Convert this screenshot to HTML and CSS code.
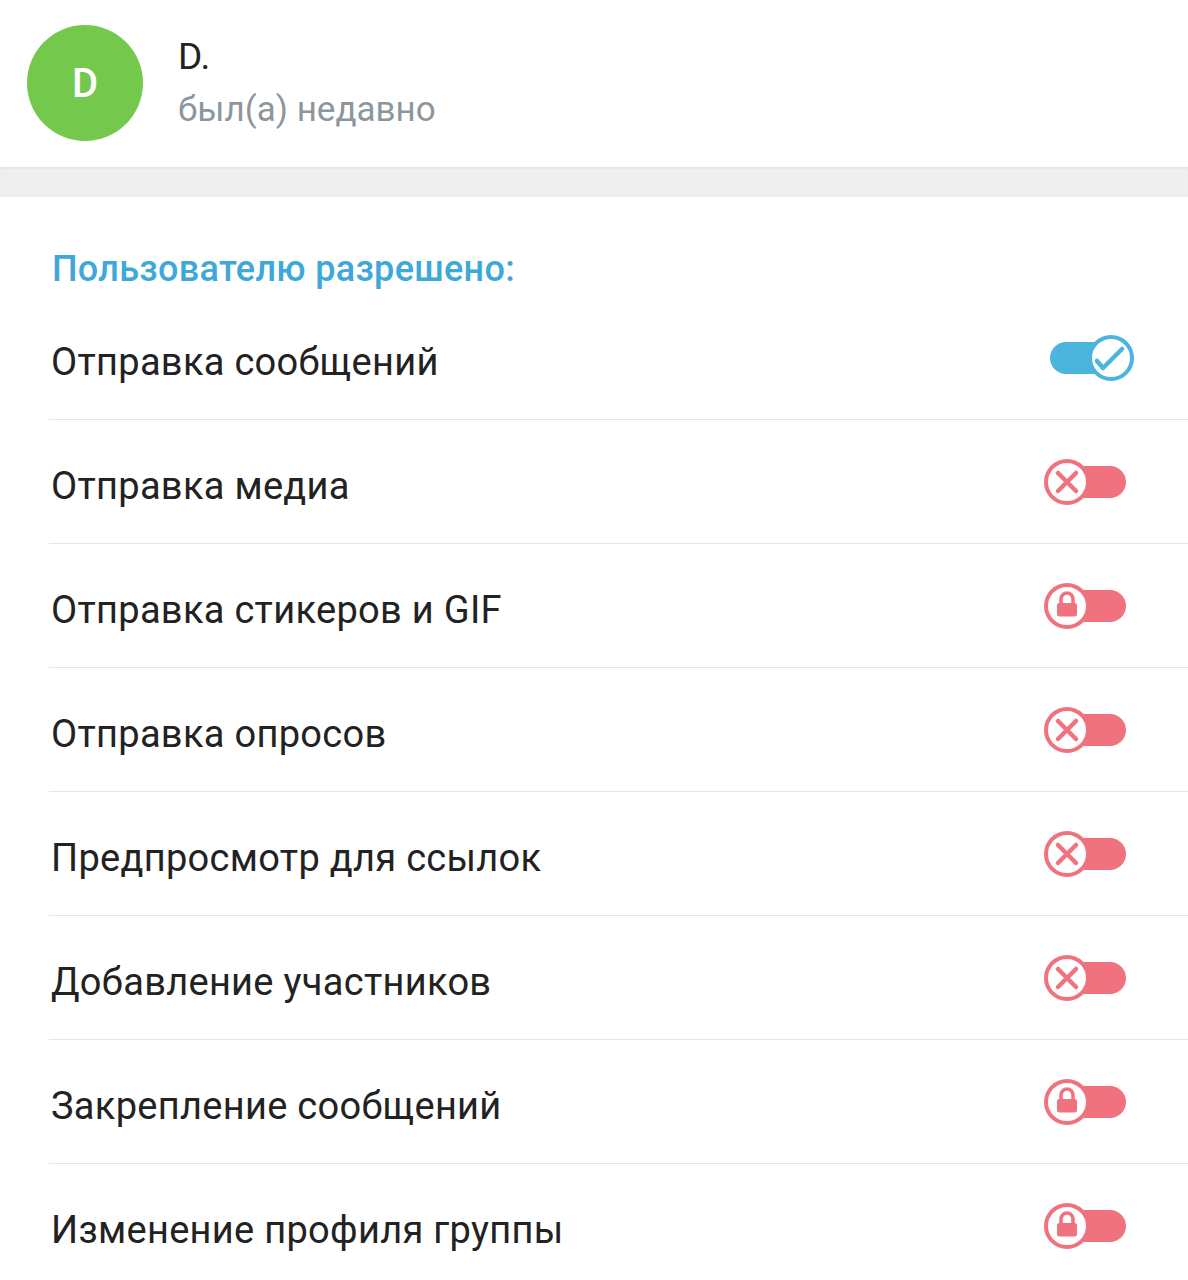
FILE: index.html
```html
<!DOCTYPE html>
<html lang="ru">
<head>
  <meta charset="UTF-8" />
  <title>Разрешения</title>
  <link rel="stylesheet" href="styles.css">
</head>
<body>

<div class="header">
  <div class="avatar">D</div>
  <div class="info">
    <div class="name">D.</div>
    <div class="status">был(а) недавно</div>
  </div>
</div>

<div class="band"></div>

<div class="section">
  <div class="section-title">Пользователю разрешено:</div>

  <div class="row">
    <span class="label">Отправка сообщений</span>
    <svg class="toggle" width="90" height="48" viewBox="0 0 90 48">
      <rect x="6" y="8" width="70" height="32" rx="16" fill="#4cb5dd"/>
      <circle cx="67" cy="24" r="21" fill="#fff" stroke="#4cb5dd" stroke-width="4"/>
      <path d="M53 27 L59 34 L78 15" fill="none" stroke="#4cb5dd" stroke-width="4.5" stroke-linecap="round" stroke-linejoin="round"/>
    </svg>
  </div>

  <div class="row">
    <span class="label">Отправка медиа</span>
    <svg class="toggle" width="90" height="48" viewBox="0 0 90 48">
      <rect x="14" y="8" width="68" height="32" rx="16" fill="#f0727e"/>
      <circle cx="23" cy="24" r="21" fill="#fff" stroke="#f0727e" stroke-width="4"/>
      <path d="M14 15 L32 33 M32 15 L14 33" stroke="#f0727e" stroke-width="4.5" stroke-linecap="round"/>
    </svg>
  </div>

  <div class="row">
    <span class="label">Отправка стикеров и GIF</span>
    <svg class="toggle" width="90" height="48" viewBox="0 0 90 48">
      <rect x="14" y="8" width="68" height="32" rx="16" fill="#f0727e"/>
      <circle cx="23" cy="24" r="21" fill="#fff" stroke="#f0727e" stroke-width="4"/>
      <path d="M17 22 V17 a6 6 0 0 1 12 0 V22" fill="none" stroke="#f0727e" stroke-width="3.5"/>
      <rect x="13" y="21" width="20" height="13.5" rx="2.5" fill="#f0727e"/>
    </svg>
  </div>

  <div class="row">
    <span class="label">Отправка опросов</span>
    <svg class="toggle" width="90" height="48" viewBox="0 0 90 48">
      <rect x="14" y="8" width="68" height="32" rx="16" fill="#f0727e"/>
      <circle cx="23" cy="24" r="21" fill="#fff" stroke="#f0727e" stroke-width="4"/>
      <path d="M14 15 L32 33 M32 15 L14 33" stroke="#f0727e" stroke-width="4.5" stroke-linecap="round"/>
    </svg>
  </div>

  <div class="row">
    <span class="label">Предпросмотр для ссылок</span>
    <svg class="toggle" width="90" height="48" viewBox="0 0 90 48">
      <rect x="14" y="8" width="68" height="32" rx="16" fill="#f0727e"/>
      <circle cx="23" cy="24" r="21" fill="#fff" stroke="#f0727e" stroke-width="4"/>
      <path d="M14 15 L32 33 M32 15 L14 33" stroke="#f0727e" stroke-width="4.5" stroke-linecap="round"/>
    </svg>
  </div>

  <div class="row">
    <span class="label">Добавление участников</span>
    <svg class="toggle" width="90" height="48" viewBox="0 0 90 48">
      <rect x="14" y="8" width="68" height="32" rx="16" fill="#f0727e"/>
      <circle cx="23" cy="24" r="21" fill="#fff" stroke="#f0727e" stroke-width="4"/>
      <path d="M14 15 L32 33 M32 15 L14 33" stroke="#f0727e" stroke-width="4.5" stroke-linecap="round"/>
    </svg>
  </div>

  <div class="row">
    <span class="label">Закрепление сообщений</span>
    <svg class="toggle" width="90" height="48" viewBox="0 0 90 48">
      <rect x="14" y="8" width="68" height="32" rx="16" fill="#f0727e"/>
      <circle cx="23" cy="24" r="21" fill="#fff" stroke="#f0727e" stroke-width="4"/>
      <path d="M17 22 V17 a6 6 0 0 1 12 0 V22" fill="none" stroke="#f0727e" stroke-width="3.5"/>
      <rect x="13" y="21" width="20" height="13.5" rx="2.5" fill="#f0727e"/>
    </svg>
  </div>

  <div class="row">
    <span class="label">Изменение профиля группы</span>
    <svg class="toggle" width="90" height="48" viewBox="0 0 90 48">
      <rect x="14" y="8" width="68" height="32" rx="16" fill="#f0727e"/>
      <circle cx="23" cy="24" r="21" fill="#fff" stroke="#f0727e" stroke-width="4"/>
      <path d="M17 22 V17 a6 6 0 0 1 12 0 V22" fill="none" stroke="#f0727e" stroke-width="3.5"/>
      <rect x="13" y="21" width="20" height="13.5" rx="2.5" fill="#f0727e"/>
    </svg>
  </div>
</div>

</body>
</html>
```

FILE: styles.css
```css
body {
  margin: 0;
  padding: 0;
  background-color: #fff;
  font-family: Roboto, "Noto Sans", Arial, sans-serif;
  color: #222;
}

.header {
  display: flex;
  align-items: flex-start;
  height: 167px;
  box-sizing: border-box;
  padding: 25px 0 0 27px;
  background-color: #fff;
}

.avatar {
  width: 116px;
  height: 116px;
  border-radius: 50%;
  background-color: #74c94d;
  color: #fff;
  font-size: 40px;
  font-weight: 500;
  display: flex;
  align-items: center;
  justify-content: center;
}

.info {
  margin-left: 35px;
  padding-top: 12px;
}

.name {
  font-size: 37px;
  line-height: 40px;
  color: #222;
}

.status {
  margin-top: 13px;
  font-size: 35px;
  line-height: 40px;
  color: #8b979d;
}

.band {
  height: 30px;
  background-color: #efefef;
  box-shadow: inset 0 2px 2px rgba(0,0,0,0.04);
}

.section {
  padding-top: 52px;
}

.section-title {
  margin-left: 52px;
  margin-bottom: 7px;
  font-size: 36px;
  line-height: 40px;
  font-weight: 500;
  letter-spacing: 0.3px;
  color: #3ea8d8;
}

.row {
  display: flex;
  align-items: center;
  justify-content: space-between;
  height: 124px;
  box-sizing: border-box;
  margin-left: 49px;
  padding-right: 54px;
  border-bottom: 1px solid #e6e6e6;
}

.label {
  padding: 8px 0 0 2px;
  font-size: 38px;
  letter-spacing: 0.3px;
  color: #222;
}

.toggle {
  display: block;
}
```
